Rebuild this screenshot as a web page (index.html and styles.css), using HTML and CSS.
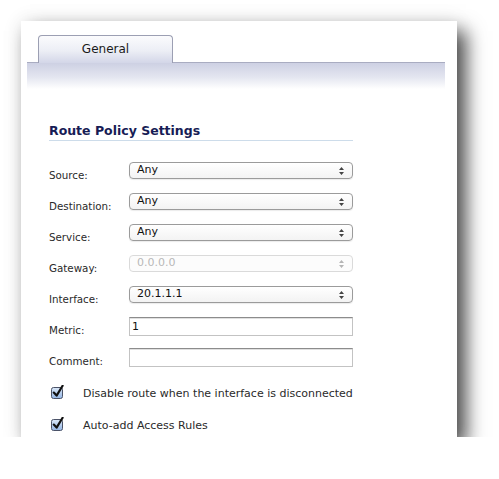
FILE: index.html
```html
<!DOCTYPE html>
<html lang="en">
<head>
    <meta charset="UTF-8">
    <meta name="viewport" content="width=device-width, initial-scale=1.0">
    <title>Route Policy</title>
    <link rel="stylesheet" href="styles.css">
</head>
<body>

    <div class="panel">
        <div class="tab-strip">
            <div class="tab-row">
                <div class="tab">General</div>
            </div>
            <div class="band"></div>
        </div>

        <div class="content">
            <h3 class="section-title">Route Policy Settings</h3>

            <form class="settings">
                <label for="source">Source:</label>
                <div class="select">
                    <select id="source"><option>Any</option></select>
                    <svg class="arrows" width="5" height="8" viewBox="0 0 5 8"><path d="M2.5 0 L5 3 H0 Z M2.5 8 L5 5 H0 Z"/></svg>
                </div>

                <label for="destination">Destination:</label>
                <div class="select">
                    <select id="destination"><option>Any</option></select>
                    <svg class="arrows" width="5" height="8" viewBox="0 0 5 8"><path d="M2.5 0 L5 3 H0 Z M2.5 8 L5 5 H0 Z"/></svg>
                </div>

                <label for="service">Service:</label>
                <div class="select">
                    <select id="service"><option>Any</option></select>
                    <svg class="arrows" width="5" height="8" viewBox="0 0 5 8"><path d="M2.5 0 L5 3 H0 Z M2.5 8 L5 5 H0 Z"/></svg>
                </div>

                <label for="gateway">Gateway:</label>
                <div class="select disabled">
                    <select id="gateway" disabled><option>0.0.0.0</option></select>
                    <svg class="arrows" width="5" height="8" viewBox="0 0 5 8"><path d="M2.5 0 L5 3 H0 Z M2.5 8 L5 5 H0 Z"/></svg>
                </div>

                <label for="interface">Interface:</label>
                <div class="select">
                    <select id="interface"><option>20.1.1.1</option></select>
                    <svg class="arrows" width="5" height="8" viewBox="0 0 5 8"><path d="M2.5 0 L5 3 H0 Z M2.5 8 L5 5 H0 Z"/></svg>
                </div>

                <label for="metric">Metric:</label>
                <input type="text" id="metric" value="1">

                <label for="comment">Comment:</label>
                <input type="text" id="comment">
            </form>

            <div class="checks">
                <div class="check-row">
                    <svg class="checkbox" width="14" height="14" viewBox="0 0 14 14">
                        <defs>
                            <linearGradient id="boxfill" x1="0" y1="0" x2="0" y2="1">
                                <stop offset="0" stop-color="#dbe8f8"/>
                                <stop offset="1" stop-color="#93b5e4"/>
                            </linearGradient>
                        </defs>
                        <rect x="0.5" y="2.5" width="11" height="11" rx="2" fill="url(#boxfill)" stroke="#4b5368"/>
                        <path d="M2.8 7.6 L5.6 10.6 L11.6 0.8" fill="none" stroke="#111" stroke-width="2.2" stroke-linecap="round" stroke-linejoin="round"/>
                    </svg>
                    <span>Disable route when the interface is disconnected</span>
                </div>
                <div class="check-row">
                    <svg class="checkbox" width="14" height="14" viewBox="0 0 14 14">
                        <rect x="0.5" y="2.5" width="11" height="11" rx="2" fill="url(#boxfill)" stroke="#4b5368"/>
                        <path d="M2.8 7.6 L5.6 10.6 L11.6 0.8" fill="none" stroke="#111" stroke-width="2.2" stroke-linecap="round" stroke-linejoin="round"/>
                    </svg>
                    <span>Auto-add Access Rules</span>
                </div>
            </div>
        </div>
    </div>

</body>
</html>
```

FILE: styles.css
```css
body {
    margin: 0;
    padding: 21px 0 0 21px;
    background: #fff;
    font-family: "DejaVu Sans", Verdana, sans-serif;
    color: #2a2a2a;
}
.panel {
    width: 436px;
    height: 416px;
    background: #fff;
    box-shadow: 9px 10px 18px rgba(0, 0, 0, 0.7), 0 0 20px rgba(0, 0, 0, 0.08);
}
.tab-strip {
    padding: 13px 12px 0 6px;
}
.tab-row {
    display: flex;
    padding-left: 11px;
}
.tab {
    width: 135px;
    height: 28px;
    box-sizing: border-box;
    border: 1px solid #9c9fb3;
    border-bottom: none;
    border-radius: 4px 4px 0 0;
    background: linear-gradient(#fbfbfd, #eceef5 55%, #d3d6e8);
    font-size: 12px;
    line-height: 26px;
    text-align: center;
    color: #1a1a1a;
    position: relative;
    top: 1px;
}
.band {
    height: 26px;
    border-top: 1px solid #a9acc1;
    background: linear-gradient(#cdd0e3, #e4e6f0 55%, #fff);
}
.content {
    width: 304px;
    padding-left: 28px;
}
.section-title {
    margin: 35px 0 0;
    padding-bottom: 2px;
    border-bottom: 1px solid #cddcea;
    font-size: 12.5px;
    line-height: 14px;
    color: #171c55;
}
.settings {
    display: grid;
    grid-template-columns: 80px 224px;
    grid-auto-rows: 19px;
    row-gap: 12px;
    margin-top: 21px;
}
.settings label {
    font-size: 10.3px;
    line-height: 12px;
    padding-top: 7px;
    color: #2a2a2a;
}
.select {
    position: relative;
    height: 17px;
}
.select select {
    display: block;
    appearance: none;
    -webkit-appearance: none;
    width: 100%;
    height: 17px;
    box-sizing: border-box;
    margin: 0;
    padding: 0 0 2px 7px;
    border: 1px solid #9b9b9b;
    border-radius: 4px;
    background: linear-gradient(#ffffff, #f3f3f3);
    box-shadow: 0 1px 1px rgba(0, 0, 0, 0.08);
    font-family: "DejaVu Sans", Verdana, sans-serif;
    font-size: 11px;
    line-height: 13px;
    color: #111;
}
.arrows {
    position: absolute;
    right: 9px;
    top: 50%;
    margin-top: -4px;
    fill: #444;
}
.disabled select {
    border-color: #cbcbcb;
    color: #9a9a9a;
    background: #fcfcfc;
    box-shadow: none;
}
.disabled .arrows {
    fill: #b5b5b5;
}
.settings input {
    height: 19px;
    box-sizing: border-box;
    margin: 0;
    padding: 0 0 0 2px;
    border: 1px solid #c3c3c3;
    border-top-color: #8c8c8c;
    box-shadow: inset 0 1px 0 #e0e0e0;
    font-family: "DejaVu Sans", Verdana, sans-serif;
    font-size: 11px;
    color: #111;
}
.checks {
    margin-top: 14px;
}
.check-row {
    display: flex;
    align-items: center;
    height: 24px;
    margin-bottom: 8px;
    padding-left: 2px;
    font-size: 11px;
}
.checkbox {
    margin-right: 18px;
    margin-top: -3px;
}
```
